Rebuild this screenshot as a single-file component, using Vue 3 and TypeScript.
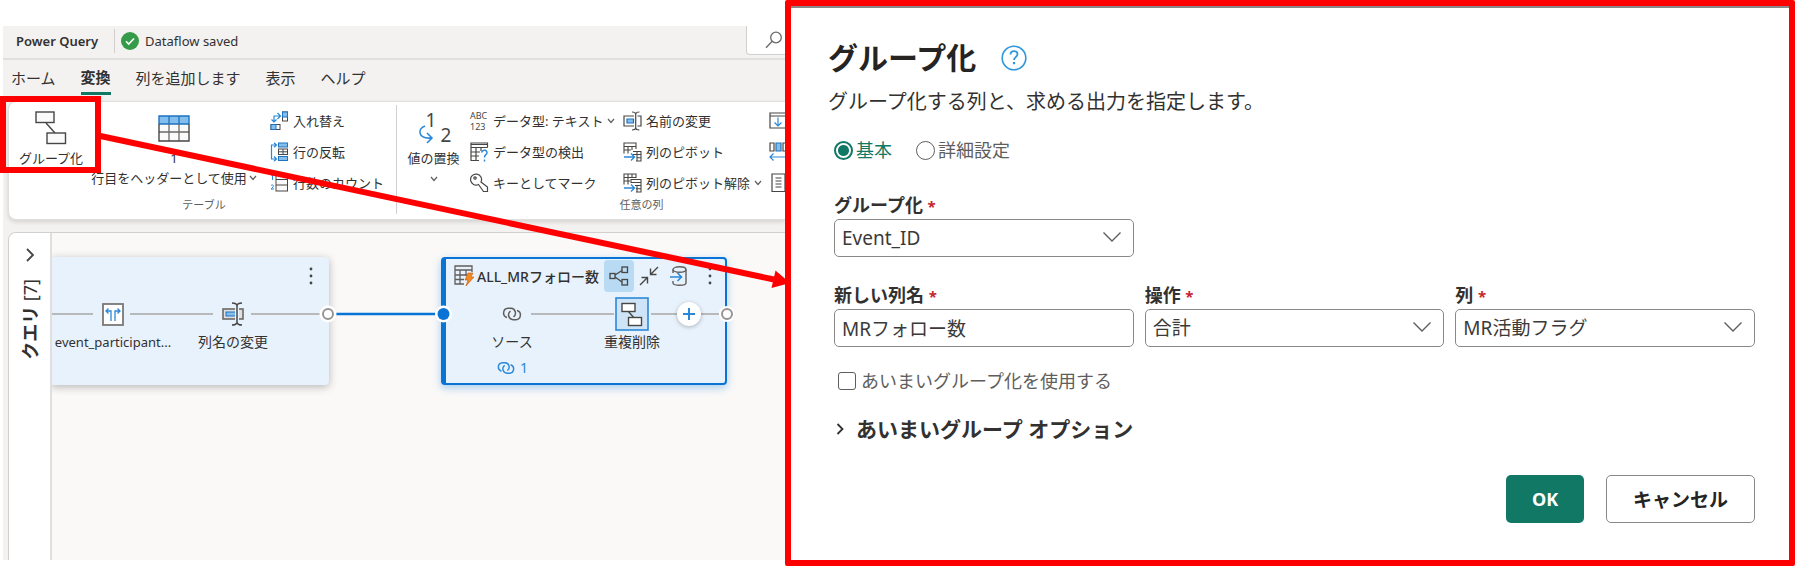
<script setup lang="ts">
import { ref } from 'vue'

interface Command {
  icon: string
  label: string
  menu?: boolean
}

const icons: Record<string, string> = {
  group:
    '<g fill="#fafafa" stroke="#484644" stroke-width="1.4"><path d="M11 12l9 10" /><rect x="1" y="1" width="18" height="10.500"/><rect x="12" y="22" width="18.500" height="10.500"/></g>',
  header:
    '<rect x="1" y="1" width="30" height="25" fill="#fafafa"/><rect x="1" y="1" width="30" height="8" fill="#83beec"/><path d="M1 9h30M11 1v8M21 1v8" stroke="#1e72c0" stroke-width="1.300"/><path d="M1 17h30M11 9v17M21 9v17" stroke="#6b6967" stroke-width="1.300"/><path d="M1 9V1h30v8" fill="none" stroke="#1e72c0" stroke-width="1.400"/><path d="M1 9v17h30V9" fill="none" stroke="#484644" stroke-width="1.400"/>',
  replace:
    '<path d="M7 17C-1 20 0 30 13 29M9 24l5 5-5 5" transform="translate(0 -2)" fill="none" stroke="#2b88d8" stroke-width="1.600"/>',
  swap:
    '<g fill="none"><rect x="12.500" y="1" width="5" height="9" fill="#fff" stroke="#484644"/><rect x="12.500" y="1" width="5" height="5" fill="#83beec" stroke="#1e72c0"/><rect x="1" y="13.500" width="9" height="5" fill="#fff" stroke="#484644"/><rect x="1" y="13.500" width="5" height="5" fill="#83beec" stroke="#1e72c0"/><path d="M4 11V5h6M7.500 2L10.500 5l-3 3M1.500 8.500L4 11l2.500-2.500" stroke="#2b88d8" stroke-width="1.200"/></g>',
  flip:
    '<g fill="none"><rect x="8.500" y="1" width="9" height="4" fill="#83beec" stroke="#1e72c0"/><rect x="8.500" y="14.500" width="9" height="4" fill="#83beec" stroke="#1e72c0"/><rect x="8.500" y="7" width="9" height="5.500" fill="#fff" stroke="#484644"/><path d="M13 7v5.500M8.500 9.800h9" stroke="#484644"/><path d="M6 3H1.500v14H6M4 .8L6.500 3 4 5.300M4 14.500L6.500 17 4 19.300" stroke="#2b88d8" stroke-width="1.200"/></g>',
  count:
    '<g fill="none" stroke="#484644"><rect x="6" y="1" width="11.500" height="17" fill="#fafafa"/><path d="M6 6.500h11.500M6 12h11.500"/><path d="M1.500 3l1-1v5M1 12.500c2-1.500 3 0 2 1.500L1 16h3" stroke="#2b88d8"/></g>',
  detect:
    '<g fill="none" stroke="#484644" stroke-width="1.200"><path d="M17.500 5.500V1H1v17.500h8M1 5.500h16.500M1 2.500h16.500M6 5.500v13M1 10h9M1 14h8M11 5.500V9"/><path d="M11.500 10.500c1-3.500 6-2.500 5.500.5-.3 2-2.500 1.500-2.500 4.500M14.500 17.500v2" stroke="#2b88d8" stroke-width="1.500"/></g>',
  key:
    '<g fill="none" stroke="#484644" stroke-width="1.200"><path d="M8.500 11.500l5 7h4v-4.500l-6.500-5A5.500 5.500 0 1 0 8.500 11.500z"/><circle cx="5" cy="5" r="1.200"/></g>',
  rename:
    '<g fill="none" stroke="#484644" stroke-width="1.200"><path d="M11 5H1v10h10M14.500 5H18v10h-3.500"/><path d="M10.500 8H4v4h6.500z" fill="#83beec" stroke="#1e72c0"/><path d="M9 1c2.500 0 3.500.6 3.700 2 .2-1.400 1.200-2 3.700-2M12.700 2.700v14.600M9 19c2.500 0 3.500-.6 3.700-2 .2 1.400 1.200 2 3.700 2"/></g>',
  pivot:
    '<g fill="none" stroke="#484644" stroke-width="1.100"><path d="M1 11.500V1h12v6M1 4.500h12M1 8h7M5 4.500v7M9 4.500V8"/><path d="M10 9.500h8v9.500h-5M10 12.500h8M14 9.500v9.500M14 15.700h4"/><path d="M1 15h10M8 11.500l3.500 3.500L8 18.500" stroke="#2b88d8" stroke-width="1.400"/></g>',
  unpivot:
    '<g fill="none" stroke="#484644" stroke-width="1.100"><path d="M1 11.500V1h12v4M5 1v10.500M9 1v4M1 4.500h12M1 8h6"/><path d="M8 10V6.500h10v12.500h-5M8 9.500h10M14 12.500v6.500M12 12.500h6M13 15.700h5"/><path d="M1 15h10M8 11.500l3.500 3.500L8 18.500" stroke="#2b88d8" stroke-width="1.400"/></g>',
  fill:
    '<g fill="none" stroke="#484644" stroke-width="1.200"><path d="M1 2h17v15H1zM1 5h17"/><path d="M9 6.500v8M5.500 11.500L9 15l3.500-3.500" stroke="#2b88d8"/></g>',
  move:
    '<g fill="none" stroke="#484644" stroke-width="1.200"><path d="M1 1h4v8H1zM14 1h4v8h-4z"/><path d="M7 1h5v8H7z" fill="#83beec" stroke="#1e72c0"/><path d="M1 15h17M4.500 11.500L1 15l3.500 3.500" stroke="#2b88d8"/></g>',
  list:
    '<g fill="none" stroke="#484644" stroke-width="1.200"><path d="M3 1h13v17.500H3zM6.500 5h6M6.500 8h6M6.500 11h6M6.500 14h6"/></g>',
}

const tabs: string[] = ['ホーム', '変換', '列を追加します', '表示', 'ヘルプ']
const activeTab = ref<string>('変換')

const tableCommands: Command[] = [
  { icon: 'swap', label: '入れ替え' },
  { icon: 'flip', label: '行の反転' },
  { icon: 'count', label: '行数のカウント' },
]
const columnCommands: Command[][] = [
  [
    { icon: 'types', label: 'データ型: テキスト', menu: true },
    { icon: 'detect', label: 'データ型の検出' },
    { icon: 'key', label: 'キーとしてマーク' },
  ],
  [
    { icon: 'rename', label: '名前の変更' },
    { icon: 'pivot', label: '列のピボット' },
    { icon: 'unpivot', label: '列のピボット解除', menu: true },
  ],
]
const moreCommands: string[] = ['fill', 'move', 'list']

const mode = ref<string>('basic')
const groupBy = ref<string>('Event_ID')
const columnName = ref<string>('MRフォロー数')
const operation = ref<string>('合計')
const column = ref<string>('MR活動フラグ')
const fuzzy = ref<boolean>(false)
</script>

<template>
  <div class="page">
    <main class="editor">
      <header class="topbar">
        <strong class="product">Power Query</strong>
        <span class="status">
          <svg width="18" height="18" viewBox="0 0 18 18"><circle cx="9" cy="9" r="9" fill="#359b49" /><path d="M5 9.300l2.700 2.700L13 6.500" fill="none" stroke="#fff" stroke-width="1.600" /></svg>
          Dataflow saved
        </span>
        <button class="search" aria-label="検索">
          <svg width="18" height="18" viewBox="0 0 18 18" fill="none" stroke="#6b6967" stroke-width="1.300"><circle cx="11" cy="6.500" r="5.300" /><path d="M7.200 10.300L1 16.800" /></svg>
        </button>
      </header>

      <nav class="tabs">
        <button v-for="t in tabs" :key="t" class="tab" :class="{ active: t === activeTab }" @click="activeTab = t">{{ t }}</button>
      </nav>

      <section class="ribbon">
        <div class="group">
          <div class="group-body">
            <button class="big first">
              <svg class="big-icon" width="32" height="36" viewBox="0 0 32 36" v-html="icons.group" />
              <span>グループ化</span>
            </button>
            <button class="big second">
              <svg class="big-icon" width="32" height="36" viewBox="0 -4 32 36" v-html="icons.header" />
              <span>1</span>
              <span class="with-menu">行目をヘッダーとして使用<svg class="caret" width="8" height="8" viewBox="0 0 8 8"><path d="M1 2l3 3.500L7 2" /></svg></span>
            </button>
            <div class="list table-list">
              <button v-for="c in tableCommands" :key="c.label" class="small">
                <svg width="19" height="20" viewBox="0 0 19 20" v-html="icons[c.icon]" />{{ c.label }}
              </button>
            </div>
          </div>
          <div class="group-name">テーブル</div>
        </div>
        <div class="group columns">
          <div class="group-body">
            <button class="big third">
              <span class="big-icon numbers"><span>1</span><span>2</span><svg width="32" height="36" viewBox="0 0 32 36" v-html="icons.replace" /></span>
              <span>値の置換</span>
              <svg class="caret" width="8" height="20" viewBox="0 -6 8 20"><path d="M1 2l3 3.500L7 2" /></svg>
            </button>
            <div v-for="(list, i) in columnCommands" :key="i" class="list column-list">
              <button v-for="c in list" :key="c.label" class="small">
                <span v-if="c.icon === 'types'" class="types"><span>ABC</span><span>123</span></span>
                <svg v-else width="19" height="20" viewBox="0 0 19 20" v-html="icons[c.icon]" />{{ c.label }}
                <svg v-if="c.menu" class="caret" width="8" height="8" viewBox="0 0 8 8"><path d="M1 2l3 3.500L7 2" /></svg>
              </button>
            </div>
            <div class="list more-list">
              <button v-for="m in moreCommands" :key="m" class="small" :aria-label="m">
                <svg width="19" height="20" viewBox="0 0 19 20" v-html="icons[m]" />
              </button>
            </div>
          </div>
          <div class="group-name">任意の列</div>
        </div>
      </section>

      <section class="workspace">
        <aside class="queries">
          <button class="expand" aria-label="クエリを展開">
            <svg width="10" height="16" viewBox="0 0 10 16"><path d="M2 2l6 6-6 6" fill="none" stroke="#484644" stroke-width="1.800" /></svg>
          </button>
          <div class="queries-title"><b>クエリ</b> [7]</div>
        </aside>

        <div class="canvas">
          <article class="node source-node">
            <svg class="kebab" width="4" height="20" viewBox="0 0 4 20"><circle cx="2" cy="3" r="1.400" /><circle cx="2" cy="10" r="1.400" /><circle cx="2" cy="17" r="1.400" /></svg>
            <svg class="links" width="278" height="2" viewBox="0 0 278 2"><path d="M0 1h43M80 1h83M201 1h70" stroke="#a8a6a4" stroke-width="1.600" /></svg>
            <div class="step step-split">
              <svg width="22" height="34" viewBox="0 -6 22 34"><rect x="1" y="1" width="20" height="21" fill="#fff" stroke="#7a7876" stroke-width="1.800" /><path d="M4.500 8h4.500v10M6.500 5.500L4 8l2.500 2.500M17.500 8H13v10M15.500 5.500L18 8l-2.500 2.500" fill="none" stroke="#2b88d8" stroke-width="1.300" /></svg>
              <span>event_participant...</span>
            </div>
            <div class="step step-rename">
              <svg width="22" height="34" viewBox="0 -5 22 34"><rect x="1" y="7" width="20" height="10" fill="#e0e0e0" stroke="#6b6967" stroke-width="1.600" /><rect x="4" y="10" width="11" height="4" fill="#83beec" stroke="#1e72c0" /><path d="M15 2v20" stroke="#e8f2fc" stroke-width="4" /><path d="M10 1c3 0 4.500.5 5 2.500.5-2 2-2.500 5-2.500M15 3v18M10 23c3 0 4.500-.5 5-2.500.5 2 2 2.500 5 2.500" fill="none" stroke="#484644" stroke-width="1.500" /></svg>
              <span>列名の変更</span>
            </div>
          </article>

          <article class="node selected-node">
            <header class="node-head">
              <svg width="20" height="22" viewBox="0 0 20 22"><g fill="none" stroke="#605e5c" stroke-width="1.300"><path d="M18 7V1H1v18h9M1 5h17M1 10h12M1 14.500h9M6 5v14M12 5v6" /></g><path d="M14 8h5l-2 4h3l-8 9 2-6h-3z" fill="#f08a24" stroke="#c8590a" stroke-width=".6" /></svg>
              <h2>ALL_MRフォロー数</h2>
              <button class="node-tool on" aria-label="関連を強調表示"><svg width="20" height="20" viewBox="0 0 20 20" fill="none" stroke="#484644" stroke-width="1.300"><path d="M6 9l7-4.500M6 11l7 5" /><rect x="1" y="7.500" width="5" height="5" /><rect x="13" y="1" width="5.500" height="5.500" /><rect x="13" y="13.500" width="5.500" height="5.500" /></svg></button>
              <button class="node-tool" aria-label="折りたたむ"><svg width="20" height="20" viewBox="0 0 20 20" fill="none" stroke="#484644" stroke-width="1.400"><path d="M19 1l-7 7M11.500 2.500v6h6M1 19l7-7M2.500 11.500h6v6" /></svg></button>
              <button class="node-tool" aria-label="読み込み"><svg width="20" height="20" viewBox="0 0 20 20" fill="none" stroke="#605e5c" stroke-width="1.400"><path d="M4 7V3.500M17 3.500V17c0 3-13 3-13 0v-2" /><ellipse cx="10.500" cy="3.500" rx="6.500" ry="2.700" /><path d="M1 11h11M8.500 7l4 4-4 4" stroke="#2b88d8" stroke-width="1.600" /></svg></button>
              <svg class="head-kebab" width="4" height="20" viewBox="0 0 4 20"><circle cx="2" cy="3" r="1.400" /><circle cx="2" cy="10" r="1.400" /><circle cx="2" cy="17" r="1.400" /></svg>
            </header>
            <svg class="links" width="280" height="2" viewBox="0 0 280 2"><path d="M85 1h83M205 1h28M255 1h20" stroke="#a8a6a4" stroke-width="1.600" /></svg>
            <div class="step step-source">
              <svg width="22" height="34" viewBox="0 -10 22 34" fill="none" stroke="#605e5c" stroke-width="1.500"><path d="M6 10.500a4.700 4.700 0 0 1 1-9.200h3a4.700 4.700 0 0 1 2.500 8.500M16 3.500a4.700 4.700 0 0 1-1 9.200h-3a4.700 4.700 0 0 1-2.500-8.500" /></svg>
              <span>ソース</span>
            </div>
            <div class="reference">
              <svg width="20" height="14" viewBox="0 0 22 14" fill="none" stroke="#2b88d8" stroke-width="1.600"><path d="M6 10.500a4.700 4.700 0 0 1 1-9.200h3a4.700 4.700 0 0 1 2.500 8.500M16 3.500a4.700 4.700 0 0 1-1 9.200h-3a4.700 4.700 0 0 1-2.500-8.500" /></svg>
              <span>1</span>
            </div>
            <div class="step step-dedupe">
              <svg width="34" height="34" viewBox="0 0 34 34"><rect x="1" y="1" width="32" height="32" fill="#cfe5f7" stroke="#2b88d8" stroke-width="1.600" /><path d="M13 14l7 8" stroke="#484644" stroke-width="1.300" /><g fill="#fff" stroke="#484644" stroke-width="1.400"><rect x="7" y="6.500" width="13" height="8" /><rect x="13.500" y="20.500" width="13" height="8" /></g></svg>
              <span>重複削除</span>
            </div>
            <button class="add" aria-label="ステップの追加"><svg width="12" height="12" viewBox="0 0 12 12"><path d="M6 0v12M0 6h12" stroke="#2b88d8" stroke-width="2" /></svg></button>
          </article>

          <svg class="wires" width="700" height="20" viewBox="0 0 700 20">
            <path d="M284 10h105" stroke="#0a74d6" stroke-width="2.400" />
            <circle cx="276" cy="10" r="8.500" fill="#fff" /><circle cx="276" cy="10" r="5" fill="#fff" stroke="#979593" stroke-width="2" />
            <circle cx="391.500" cy="10" r="8.500" fill="#fff" /><circle cx="391.500" cy="10" r="6" fill="#0a74d6" />
            <circle cx="675" cy="10" r="8" fill="#fff" /><circle cx="675" cy="10" r="5" fill="#fff" stroke="#979593" stroke-width="2" />
          </svg>
        </div>
      </section>

      <div class="callout" />
      <svg class="arrow" width="800" height="300" viewBox="0 0 800 300"><path d="M98 135.500L774 279.500" stroke="#f00" stroke-width="6" /><path d="M775.500 270.500l-4 17.500L790 283z" fill="#f00" /></svg>
    </main>

    <form class="dialog" @submit.prevent>
      <div class="title">
        <h1>グループ化</h1>
        <svg width="26" height="26" viewBox="0 0 26 26" fill="none" stroke="#2f97dc"><circle cx="13" cy="13" r="11.800" stroke-width="1.600" /><path d="M9.500 9.500c0-4.500 7-4.500 7-.5 0 3-3.500 3.200-3.500 6" stroke-width="1.800" /><path d="M13 17v2.200" stroke-width="2.200" /></svg>
      </div>
      <p class="description">グループ化する列と、求める出力を指定します。</p>

      <div class="modes">
        <label class="mode" :class="{ chosen: mode === 'basic' }"><input v-model="mode" type="radio" name="mode" value="basic" />基本</label>
        <label class="mode" :class="{ chosen: mode === 'advanced' }"><input v-model="mode" type="radio" name="mode" value="advanced" />詳細設定</label>
      </div>

      <div class="fields">
        <div class="field">
          <label for="group-by">グループ化 <i>*</i></label>
          <div class="drop">
            <select id="group-by" v-model="groupBy"><option>Event_ID</option></select>
            <svg width="20" height="12" viewBox="0 0 20 12"><path d="M1.500 1.500L10 10l8.500-8.500" /></svg>
          </div>
        </div>
      </div>
      <div class="fields">
        <div class="field">
          <label for="column-name">新しい列名 <i>*</i></label>
          <input id="column-name" v-model="columnName" type="text" />
        </div>
        <div class="field">
          <label for="operation">操作 <i>*</i></label>
          <div class="drop">
            <select id="operation" v-model="operation"><option>合計</option></select>
            <svg width="20" height="12" viewBox="0 0 20 12"><path d="M1.500 1.500L10 10l8.500-8.500" /></svg>
          </div>
        </div>
        <div class="field">
          <label for="column">列 <i>*</i></label>
          <div class="drop">
            <select id="column" v-model="column"><option>MR活動フラグ</option></select>
            <svg width="20" height="12" viewBox="0 0 20 12"><path d="M1.500 1.500L10 10l8.500-8.500" /></svg>
          </div>
        </div>
      </div>

      <label class="fuzzy"><input v-model="fuzzy" type="checkbox" />あいまいグループ化を使用する</label>
      <button type="button" class="options">
        <svg width="8" height="12" viewBox="0 0 8 12"><path d="M1.500 1l5 5-5 5" fill="none" stroke="#323130" stroke-width="1.800" /></svg>あいまいグループ オプション
      </button>

      <footer class="actions">
        <button class="ok">OK</button>
        <button type="button" class="cancel">キャンセル</button>
      </footer>
    </form>
  </div>
</template>

<style>
body {
  margin: 0;
  background: #fff;
}
</style>

<style scoped>
* {
  box-sizing: border-box;
}
.page {
  display: grid;
  grid-template-columns: 785fr 1011fr;
  min-height: 100vh;
  font-family: 'Noto Sans', 'Noto Sans CJK JP', sans-serif;
  font-size: 13px;
  color: #323130;
}
button,
input,
select {
  font: inherit;
  color: inherit;
  margin: 0;
}
button {
  padding: 0;
  border: 0;
  background: none;
  white-space: nowrap;
}
svg {
  flex: none;
  display: block;
}
.editor {
  position: relative;
  display: flex;
  flex-direction: column;
  min-width: 0;
  margin: 26px 0 6px 3px;
  background: #f3f2f1;
}
.topbar {
  display: flex;
  align-items: center;
  height: 34px;
  padding: 0 0 2px 13px;
  border-bottom: 2px solid #e1dfdd;
  overflow: hidden;
}
.product {
  padding-right: 16px;
  font-weight: 600;
  line-height: 24px;
  border-right: 1px solid #d2d0ce;
}
.status {
  display: flex;
  align-items: center;
  gap: 6px;
  margin-left: 6px;
}
.search {
  display: flex;
  align-items: center;
  align-self: flex-start;
  width: 39px;
  height: 29px;
  margin-left: auto;
  padding-left: 18px;
  background: #fff;
  border: 1px solid #d2d0ce;
  border-top: 0;
  border-right: 0;
  border-radius: 0 0 0 4px;
}
.tabs {
  display: flex;
  gap: 25px;
  height: 41px;
  padding-left: 8px;
}
.tab {
  align-self: flex-start;
  height: 35px;
  font-size: 15px;
  line-height: 34px;
}
.tab.active {
  font-weight: 700;
  border-bottom: 3px solid #117865;
}
.ribbon {
  display: flex;
  height: 119px;
  margin-left: 5px;
  padding: 3px 0 5px 3px;
  background: #fff;
  border: 1px solid #e1dfdd;
  border-right: 0;
  border-radius: 8px 0 0 8px;
  box-shadow: 0 2px 4px #0002;
  overflow: hidden;
}
.group {
  flex: none;
}
.columns {
  padding-left: 6px;
  border-left: 1px solid #d2d0ce;
}
.group-body {
  display: flex;
}
.group-name {
  font-size: 11px;
  line-height: 14px;
  text-align: center;
  color: #605e5c;
}
.big {
  display: flex;
  flex-direction: column;
  align-items: center;
  padding-top: 6px;
  line-height: 22px;
}
.first {
  width: 78px;
}
.second {
  width: 168px;
}
.third {
  width: 61px;
}
.with-menu {
  display: flex;
  align-items: center;
  gap: 2px;
  line-height: 18px;
}
.caret {
  fill: none;
  stroke: #605e5c;
  stroke-width: 1.2;
}
.numbers {
  position: relative;
  display: flex;
  width: 32px;
  height: 36px;
  padding-left: 8px;
  gap: 4px;
  font-size: 19px;
  line-height: 18px;
  color: #484644;
}
.numbers span + span {
  padding-top: 15px;
}
.numbers svg {
  position: absolute;
  left: 0;
  top: 0;
}
.list {
  display: flex;
  flex-direction: column;
}
.table-list {
  width: 138px;
  padding-left: 12px;
}
.column-list {
  width: 155px;
  padding-left: 6px;
}
.column-list + .column-list {
  width: 148px;
  padding-left: 4px;
}
.more-list {
  width: 113px;
  padding-left: 2px;
}
.small {
  display: flex;
  align-items: center;
  gap: 4px;
  height: 31px;
}
.types {
  display: flex;
  flex-direction: column;
  width: 19px;
  font-size: 9px;
  line-height: 11px;
  text-align: left;
  color: #484644;
}
.workspace {
  flex: 1;
  display: flex;
  min-height: 0;
  margin: 12px 0 0 5px;
  background: #faf9f8;
  border: 1px solid #d2d0ce;
  border-width: 1px 0 0 1px;
  border-radius: 8px 0 0 0;
  overflow: hidden;
}
.queries {
  display: flex;
  flex-direction: column;
  align-items: center;
  gap: 16px;
  width: 43px;
  padding-top: 14px;
  background: #fff;
  border-right: 2px solid #e1dfdd;
}
.queries-title {
  writing-mode: vertical-rl;
  text-orientation: sideways;
  transform: rotate(180deg);
  font-size: 18px;
  line-height: 24px;
  white-space: nowrap;
}
.canvas {
  position: relative;
  flex: 1;
  min-width: 0;
  overflow: hidden;
}
.node {
  position: absolute;
  top: 24px;
  height: 128px;
  background: #e8f2fc;
  border-radius: 4px;
  box-shadow: 0 2px 8px #0004;
  font-size: 14px;
}
.source-node {
  left: -2px;
  width: 279px;
}
.selected-node {
  left: 389px;
  width: 286px;
  border: 2px solid #0a74d6;
  border-left-width: 5px;
  box-shadow: 0 3px 8px #0a74d655;
}
.kebab,
.head-kebab {
  fill: #484644;
}
.kebab {
  position: absolute;
  top: 9px;
  right: 16px;
}
.links {
  position: absolute;
  left: 0;
  top: 56px;
}
.selected-node .links {
  top: 54px;
}
.step {
  position: absolute;
  top: 40px;
  display: flex;
  flex-direction: column;
  align-items: center;
  width: 120px;
  line-height: 22px;
  white-space: nowrap;
}
.step-split span {
  font-size: 13px;
}
.step-split {
  left: 3px;
}
.step-rename {
  left: 123px;
}
.selected-node .step {
  top: 38px;
}
.selected-node .step-source {
  left: 6px;
}
.selected-node .step-dedupe {
  left: 126px;
}
.reference {
  position: absolute;
  top: 99px;
  left: 50px;
  display: flex;
  align-items: center;
  gap: 4px;
  line-height: 20px;
  color: #2b88d8;
}
.add {
  position: absolute;
  top: 43px;
  left: 231px;
  display: grid;
  place-items: center;
  width: 24px;
  height: 24px;
  background: #fff;
  border-radius: 50%;
  box-shadow: 0 1px 4px #0004;
}
.node-head {
  display: flex;
  align-items: center;
  height: 34px;
  padding-left: 8px;
}
.node-head h2 {
  width: 127px;
  margin: 0 0 0 3px;
  font-size: 14px;
  font-weight: 500;
  white-space: nowrap;
}
.node-tool {
  display: grid;
  place-items: center;
  width: 30px;
  height: 32px;
  border-radius: 4px;
}
.on {
  background: #b9daf3;
}
.head-kebab {
  margin-left: 14px;
}
.wires {
  position: absolute;
  left: 0;
  top: 71px;
}
.callout {
  position: absolute;
  left: -3px;
  top: 70px;
  width: 101px;
  height: 77px;
  border: 6px solid #f00;
}
.arrow {
  position: absolute;
  left: -3px;
  top: -26px;
  pointer-events: none;
}
.dialog {
  position: relative;
  display: flex;
  flex-direction: column;
  margin-right: 1px;
  padding: 30px 34px 37px 43px;
  background: #fff;
  border: 6px solid #f00;
  border-radius: 2px;
  box-shadow: inset 0 2px 0 #8a8886;
  font-size: 18px;
}
.title {
  display: flex;
  align-items: center;
  gap: 25px;
  margin-left: -6px;
  height: 43px;
}
h1 {
  margin: 0;
  font-size: 30px;
  line-height: 40px;
  color: #252423;
}
.description {
  margin: 9px 0 0 -6px;
  font-size: 20px;
  line-height: 28px;
}
.modes {
  display: flex;
  gap: 24px;
  margin-top: 22px;
  line-height: 24px;
}
.mode {
  display: flex;
  align-items: center;
  gap: 3px;
  color: #605e5c;
}
.mode input {
  appearance: none;
  width: 19px;
  height: 19px;
  border: 1px solid #605e5c;
  border-radius: 50%;
}
.mode.chosen {
  color: #117865;
}
.mode input:checked {
  border: 2px solid #117865;
  background: radial-gradient(#117865 5px, #fff 6px);
}
.fields {
  display: grid;
  grid-template-columns: repeat(3, 1fr);
  gap: 11px;
  margin-top: 26px;
}
.modes + .fields {
  margin-top: 31px;
}
.field > label {
  display: block;
  height: 24px;
  margin-bottom: 2px;
  font-weight: 700;
  line-height: 24px;
}
.field i {
  font-size: 15px;
  font-style: normal;
  color: #c4262e;
}
.drop {
  position: relative;
}
.drop svg {
  position: absolute;
  right: 12px;
  top: 12px;
  fill: none;
  stroke: #605e5c;
  stroke-width: 1.4;
  pointer-events: none;
}
select,
.field input {
  display: block;
  appearance: none;
  width: 100%;
  height: 38px;
  padding: 0 7px;
  font-size: 19px;
  color: #3b3a39;
  background: #fff;
  border: 1px solid #8a8886;
  border-radius: 5px;
  outline: 0;
}
.fuzzy {
  display: flex;
  align-items: center;
  gap: 5px;
  margin: 22px 0 0 4px;
  line-height: 24px;
  color: #605e5c;
}
.fuzzy input {
  appearance: none;
  width: 18px;
  height: 18px;
  border: 1px solid #605e5c;
  border-radius: 3px;
}
.options {
  display: flex;
  align-items: center;
  align-self: flex-start;
  gap: 12px;
  margin: 22px 0 0 2px;
  font-size: 21px;
  font-weight: 700;
  line-height: 28px;
}
.actions {
  display: flex;
  justify-content: flex-end;
  gap: 22px;
  margin-top: auto;
}
.actions button {
  height: 48px;
  font-weight: 700;
  border-radius: 5px;
}
.ok {
  width: 78px;
  color: #fff;
  background: #117865;
}
.actions .cancel {
  width: 149px;
  font-size: 19px;
  color: #252423;
  border: 1px solid #8a8886;
}
</style>
